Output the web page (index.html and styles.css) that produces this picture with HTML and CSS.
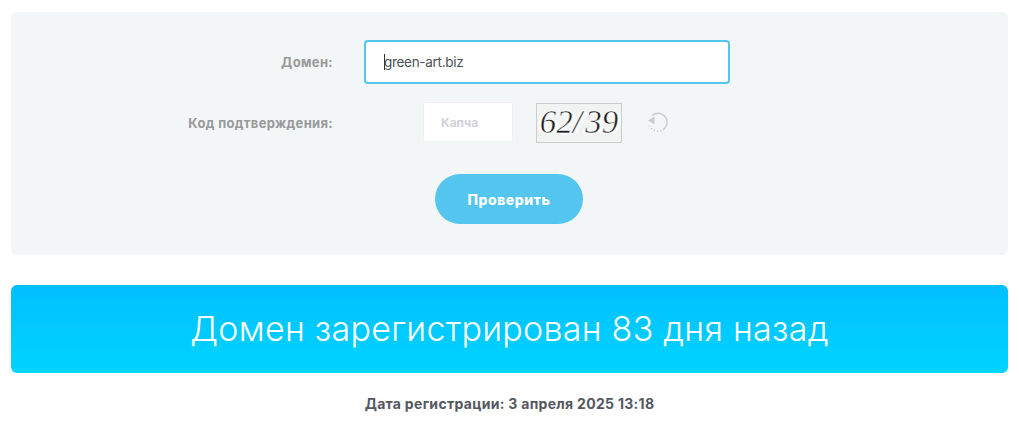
FILE: index.html
```html
<!DOCTYPE html>
<html lang="ru">
<head>
    <meta charset="UTF-8">
    <title>Проверка домена</title>
    <link rel="stylesheet" href="styles.css">
</head>
<body>
    <form class="check-form">
        <div class="form-row">
            <label class="form-label" for="domain">Домен:</label>
            <div class="domain-field">
                <input class="domain-input" id="domain" type="text" value="green-art.biz">
                <span class="caret"></span>
            </div>
        </div>
        <div class="form-row captcha-row">
            <label class="form-label" for="captcha">Код подтверждения:</label>
            <div class="captcha-group">
                <input class="captcha-input" id="captcha" type="text" placeholder="Капча">
                <div class="captcha-image"><span>62/ 39</span></div>
                <svg class="refresh-icon" width="24" height="24" viewBox="0 0 24 24" fill="none">
                    <path d="M6 5.5A9 9 0 1 1 18 19" stroke="#c8ccd0" stroke-width="1.5"/>
                    <path d="M18 19A9 9 0 0 1 3.5 15" stroke="#c4c8cc" stroke-width="1.4" stroke-dasharray="1.2 2"/>
                    <path d="M2 10.5L8.5 6.5V14.5z" fill="#c8ccd0"/>
                </svg>
            </div>
        </div>
        <div class="form-actions">
            <button class="check-btn" type="button">Проверить</button>
        </div>
    </form>

    <div class="result-banner">Домен зарегистрирован 83 дня назад</div>
    <p class="result-date">Дата регистрации: 3 апреля 2025 13:18</p>
</body>
</html>
```

FILE: styles.css
```css
body {
    font-family: Inter, "Noto Sans", sans-serif;
    margin: 0;
    padding: 12px 11px 0;
    background: #fff;
}
.check-form {
    background: #f3f6f7;
    border-radius: 6px;
    padding: 28px 0 31px;
}
.form-row {
    display: grid;
    grid-template-columns: 322px 1fr;
    column-gap: 31px;
    align-items: center;
}
.captcha-row {
    margin-top: 18px;
}
.form-label {
    text-align: right;
    font-size: 13px;
    font-weight: 700;
    letter-spacing: 0.33px;
    color: #97999b;
}
.domain-field {
    position: relative;
    width: 366px;
    height: 44px;
}
.domain-input {
    box-sizing: border-box;
    width: 100%;
    height: 100%;
    padding: 0 0 0 18px;
    border: 2px solid #54c5ee;
    border-radius: 4px;
    background: #fff;
    outline: none;
    font-family: inherit;
    font-size: 13.5px;
    letter-spacing: -0.3px;
    color: #4b4f56;
}
.caret {
    position: absolute;
    left: 20px;
    top: 14px;
    width: 1px;
    height: 16px;
    background: #333;
}
.captcha-group {
    display: flex;
    align-items: flex-start;
    padding-left: 59px;
}
.captcha-input {
    box-sizing: border-box;
    width: 90px;
    height: 40px;
    padding: 0 0 0 17px;
    border: 1px solid #eef0f1;
    background: #fff;
    outline: none;
    font-family: inherit;
    font-size: 12px;
    font-weight: 700;
}
.captcha-input::placeholder {
    color: #d0d2d6;
    opacity: 1;
}
.captcha-image {
    box-sizing: border-box;
    width: 86px;
    height: 40px;
    margin: 1px 0 0 23px;
    border: 1px solid #ccc;
    background: #f1f3f3;
    text-align: center;
    overflow: hidden;
}
.captcha-image span {
    display: inline-block;
    font-family: "Liberation Serif", serif;
    font-style: italic;
    font-size: 33px;
    line-height: 37px;
    word-spacing: -5px;
    color: #222;
    -webkit-text-stroke: 0.5px #fff;
    text-shadow: 1px 0 2px #fff, 3px 1px 2px #fff, -2px 1px 2px #fff;
}
.refresh-icon {
    margin: 8px 0 0 24px;
}
.form-actions {
    display: flex;
    justify-content: center;
    margin-top: 31px;
}
.check-btn {
    width: 148px;
    height: 50px;
    margin-right: 1px;
    border: none;
    border-radius: 25px;
    background: #54c5ee;
    color: #fff;
    font-family: inherit;
    font-size: 14px;
    font-weight: 800;
    letter-spacing: 0.5px;
    cursor: pointer;
}
.result-banner {
    margin-top: 30px;
    height: 88px;
    border-radius: 6px;
    background: linear-gradient(#00bfff, #00d4ff);
    color: #fff;
    font-size: 34px;
    font-weight: 300;
    letter-spacing: 0.26px;
    line-height: 88px;
    text-align: center;
}
.result-date {
    margin: 22px 0 0;
    text-align: center;
    font-size: 14px;
    font-weight: 700;
    letter-spacing: 0.3px;
    line-height: 18px;
    color: #54585f;
}
```
